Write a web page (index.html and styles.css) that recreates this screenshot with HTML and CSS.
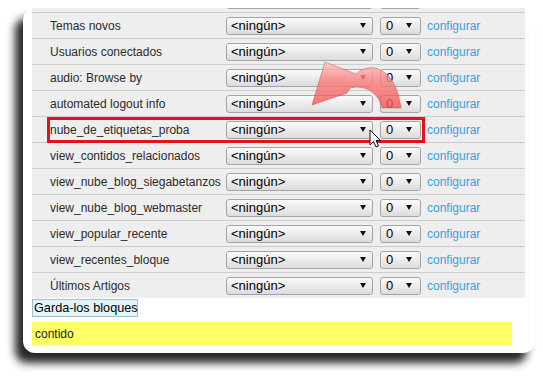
FILE: index.html
```html
<!DOCTYPE html>
<html lang="gl">
<head>
    <meta charset="UTF-8">
    <title>Bloques</title>
    <link rel="stylesheet" href="styles.css">
</head>
<body>
    <div class="screen">
        <div class="card">
            <div class="blocks">
                <!-- row above, only its lower edge shows -->
                <div class="row">
                    <span class="label"></span>
                    <span class="select wide"></span>
                    <span class="select narrow"></span>
                    <span></span>
                </div>
                <div class="row">
                    <span class="label">Temas novos</span>
                    <span class="select wide"><span>&lt;ningún&gt;</span><i class="caret"></i></span>
                    <span class="select narrow"><span>0</span><i class="caret"></i></span>
                    <a class="link" href="#">configurar</a>
                </div>
                <div class="row">
                    <span class="label">Usuarios conectados</span>
                    <span class="select wide"><span>&lt;ningún&gt;</span><i class="caret"></i></span>
                    <span class="select narrow"><span>0</span><i class="caret"></i></span>
                    <a class="link" href="#">configurar</a>
                </div>
                <div class="row">
                    <span class="label">audio: Browse by</span>
                    <span class="select wide"><span>&lt;ningún&gt;</span><i class="caret"></i></span>
                    <span class="select narrow"><span>0</span><i class="caret"></i></span>
                    <a class="link" href="#">configurar</a>
                </div>
                <div class="row">
                    <span class="label">automated logout info</span>
                    <span class="select wide"><span>&lt;ningún&gt;</span><i class="caret"></i></span>
                    <span class="select narrow"><span>0</span><i class="caret"></i></span>
                    <a class="link" href="#">configurar</a>
                </div>
                <div class="row">
                    <span class="label">nube_de_etiquetas_proba</span>
                    <span class="select wide"><span>&lt;ningún&gt;</span><i class="caret"></i></span>
                    <span class="select narrow"><span>0</span><i class="caret"></i></span>
                    <a class="link" href="#">configurar</a>
                </div>
                <div class="row">
                    <span class="label">view_contidos_relacionados</span>
                    <span class="select wide"><span>&lt;ningún&gt;</span><i class="caret"></i></span>
                    <span class="select narrow"><span>0</span><i class="caret"></i></span>
                    <a class="link" href="#">configurar</a>
                </div>
                <div class="row">
                    <span class="label">view_nube_blog_siegabetanzos</span>
                    <span class="select wide"><span>&lt;ningún&gt;</span><i class="caret"></i></span>
                    <span class="select narrow"><span>0</span><i class="caret"></i></span>
                    <a class="link" href="#">configurar</a>
                </div>
                <div class="row">
                    <span class="label">view_nube_blog_webmaster</span>
                    <span class="select wide"><span>&lt;ningún&gt;</span><i class="caret"></i></span>
                    <span class="select narrow"><span>0</span><i class="caret"></i></span>
                    <a class="link" href="#">configurar</a>
                </div>
                <div class="row">
                    <span class="label">view_popular_recente</span>
                    <span class="select wide"><span>&lt;ningún&gt;</span><i class="caret"></i></span>
                    <span class="select narrow"><span>0</span><i class="caret"></i></span>
                    <a class="link" href="#">configurar</a>
                </div>
                <div class="row">
                    <span class="label">view_recentes_bloque</span>
                    <span class="select wide"><span>&lt;ningún&gt;</span><i class="caret"></i></span>
                    <span class="select narrow"><span>0</span><i class="caret"></i></span>
                    <a class="link" href="#">configurar</a>
                </div>
                <div class="row">
                    <span class="label">Últimos Artigos</span>
                    <span class="select wide"><span>&lt;ningún&gt;</span><i class="caret"></i></span>
                    <span class="select narrow"><span>0</span><i class="caret"></i></span>
                    <a class="link" href="#">configurar</a>
                </div>
            </div>

            <button class="save">Garda-los bloques</button>

            <div class="region">contido</div>

            <!-- red frame round the row being pointed at -->
            <div class="highlight"></div>
        </div>

        <svg class="overlay" width="543" height="377" viewBox="0 0 543 377">
            <defs>
                <linearGradient id="arrow-fill" x1="0" y1="0" x2="0" y2="1">
                    <stop offset="0" stop-color="#ffc8c8"/>
                    <stop offset="0.35" stop-color="#fa8484"/>
                    <stop offset="1" stop-color="#f25050"/>
                </linearGradient>
            </defs>
            <path d="M325,62 L356,74 C370,60 396,68 401,108 L382,108 C379,94 366,84 350,88 L347,93 L312,105 Z"
                  fill="url(#arrow-fill)" fill-opacity="0.8" stroke="#c84848" stroke-opacity="0.6" stroke-width="0.8"/>
            <path transform="translate(370,130)" d="M0,0 L0,15 L3.5,11.5 L6,17 L8.5,16 L6,10.5 L10.5,10.5 Z"
                  fill="#fff" stroke="#111" stroke-width="1" stroke-linejoin="round"/>
        </svg>
    </div>
</body>
</html>
```

FILE: styles.css
```css
body {
    margin: 0;
    background-color: #fff;
    font-family: 'Liberation Sans', Arial, sans-serif;
}

.screen {
    position: relative;
    width: 543px;
    height: 377px;
    overflow: hidden;
    padding-top: 8px;
    box-sizing: border-box;
}

.card {
    position: relative;
    width: 512px;
    height: 345px;
    margin-left: 23px;
    padding: 0 10px 0 9px;
    box-sizing: border-box;
    background-color: #fff;
    border-radius: 12px;
    overflow: hidden;
    box-shadow: -8px 10px 9px rgba(0, 0, 0, 0.85);
}

.blocks {
    margin-top: -21px;
    background-color: #eee;
}

.row {
    display: grid;
    grid-template-columns: 194px 154px 47px 1fr;
    align-items: center;
    height: 25px;
    border-bottom: 1px solid #cdcdcd;
}

.row:last-child {
    border-bottom: none;
}

.label {
    padding-left: 18px;
    font-size: 12px;
    color: #2b2b2b;
    white-space: nowrap;
}

.select {
    display: flex;
    align-items: center;
    justify-content: space-between;
    height: 18px;
    box-sizing: border-box;
    border: 1px solid #a4a4a4;
    border-radius: 3px;
    background: linear-gradient(#fbfbfb, #dcdcdc);
    font-size: 13px;
    color: #000;
}

.wide {
    width: 147px;
    padding: 0 6px 0 4px;
}

.narrow {
    width: 41px;
    padding: 0 8px 0 5px;
}

.caret {
    width: 0;
    height: 0;
    border-left: 3px solid transparent;
    border-right: 3px solid transparent;
    border-top: 5px solid #111;
}

.link {
    font-size: 12px;
    color: #3aa0dc;
    text-decoration: none;
}

.save {
    display: block;
    width: 106px;
    height: 18px;
    margin: 1px 0 0;
    padding: 0 1px;
    border: 1px solid #a3bccb;
    background-color: #e4f2fa;
    font-family: 'Liberation Sans', Arial, sans-serif;
    font-size: 12.7px;
    color: #000;
    text-align: left;
    white-space: nowrap;
}

.region {
    width: 480px;
    height: 24px;
    margin-top: 5px;
    padding-left: 3px;
    box-sizing: border-box;
    background-color: #ffff66;
    font-size: 12px;
    line-height: 24px;
    color: #222;
}

.highlight {
    position: absolute;
    left: 24px;
    top: 109px;
    width: 378px;
    height: 26px;
    box-sizing: border-box;
    border: 3px solid #e4121c;
}

.overlay {
    position: absolute;
    left: 0;
    top: 0;
    pointer-events: none;
}
```
